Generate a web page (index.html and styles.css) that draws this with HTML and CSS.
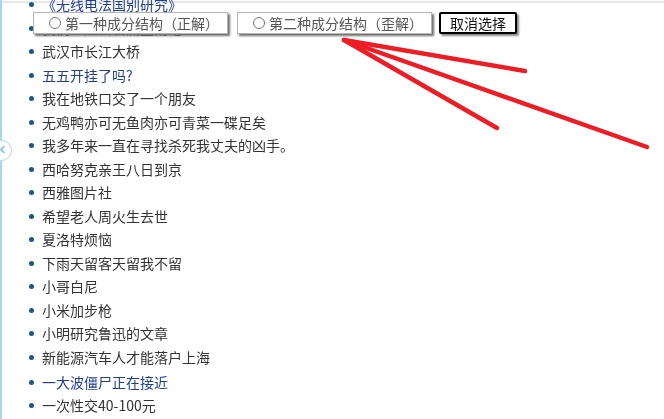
FILE: index.html
```html
<!DOCTYPE html>
<html lang="zh-CN">
<head>
    <meta charset="UTF-8">
    <meta name="viewport" content="width=device-width, initial-scale=1.0">
    <title>成分结构</title>
    <link rel="stylesheet" href="styles.css">
</head>
<body>
    <div class="topline"></div>
    <div class="sidebar"></div>
    <div class="toggle">
        <svg width="21" height="21" viewBox="0 0 21 21">
            <polyline points="13.5,6 10,9.5 13.5,13" fill="none" stroke="#7cc0ea" stroke-width="1.6"/>
        </svg>
    </div>

    <ul class="list">
        <li class="link">《无线电法国别研究》</li>
        <li>我们一起去看流星雨吧</li>
        <li>武汉市长江大桥</li>
        <li class="link">五五开挂了吗?</li>
        <li>我在地铁口交了一个朋友</li>
        <li>无鸡鸭亦可无鱼肉亦可青菜一碟足矣</li>
        <li>我多年来一直在寻找杀死我丈夫的凶手。</li>
        <li>西哈努克亲王八日到京</li>
        <li>西雅图片社</li>
        <li>希望老人周火生去世</li>
        <li>夏洛特烦恼</li>
        <li>下雨天留客天留我不留</li>
        <li>小哥白尼</li>
        <li>小米加步枪</li>
        <li>小明研究鲁迅的文章</li>
        <li>新能源汽车人才能落户上海</li>
        <li class="link gap">一大波僵尸正在接近</li>
        <li>一次性交40-100元</li>
    </ul>

    <div class="bar">
        <label class="choice"><span class="radio"></span>第一种成分结构（正解）</label>
        <label class="choice"><span class="radio"></span>第二种成分结构（歪解）</label>
        <button class="clear">取消选择</button>
    </div>

    <svg class="arrows" width="664" height="419" viewBox="0 0 664 419">
        <g stroke="#ee1c25" stroke-width="4.5" stroke-linecap="round" fill="none">
            <line x1="344" y1="40" x2="525" y2="71"/>
            <line x1="344" y1="40" x2="497" y2="128"/>
            <line x1="344" y1="40" x2="647" y2="147"/>
        </g>
    </svg>
</body>
</html>
```

FILE: styles.css
```css
*{
    box-sizing: border-box;
    padding: 0;
    margin: 0;
    font-family: "Noto Sans CJK SC", "Noto Sans", sans-serif;
}
body{
    background-color: #fff;
    color: #333;
    font-size: 14px;
    overflow: hidden;
    height: 419px;
}
.topline{
    position: fixed;
    top: 1px;
    left: 0;
    right: 0;
    height: 2px;
    background-color: #e8e8e8;
    z-index: -1;
}
.sidebar{
    position: fixed;
    top: 0;
    bottom: 0;
    left: 0;
    width: 2px;
    background-color: #a6d6f6;
}
.toggle{
    position: fixed;
    top: 140px;
    left: -9px;
    width: 21px;
    height: 21px;
    border: 1px solid #a6d6f6;
    border-radius: 50%;
    background-color: #fff;
}
.toggle svg{
    display: block;
    margin: -1px;
}
.list{
    list-style: none;
    margin-top: -7px;
    padding-left: 29px;
}
.list li{
    display: flex;
    align-items: center;
    height: 23.5px;
    line-height: 23.5px;
}
.list li::before{
    content: "";
    width: 5px;
    height: 5px;
    border-radius: 50%;
    background-color: #1b5591;
    margin-right: 8px;
    flex-shrink: 0;
}
.list .link{
    color: #1f3d9d;
}
.list .gap{
    margin-top: 1.5px;
}
.bar{
    position: fixed;
    top: 12px;
    left: 33px;
    display: flex;
    align-items: flex-start;
    gap: 9px;
}
.choice{
    display: flex;
    align-items: center;
    gap: 4px;
    width: 195px;
    height: 22px;
    padding-left: 15px;
    background-color: #fff;
    border: 1px solid #b4b4b4;
    box-shadow: 2px 2px 2px #6e6e6e;
    color: #555;
    font-size: 14px;
}
.radio{
    width: 12px;
    height: 12px;
    border: 1px solid #777;
    border-radius: 50%;
    background-color: #fff;
}
.clear{
    width: 78px;
    height: 22px;
    margin-left: -2px;
    background-color: #fff;
    border: 2px solid #000;
    border-radius: 2px;
    box-shadow: 2px 2px 2px #8a8a8a;
    color: #111;
    font-size: 14px;
    line-height: 16px;
}
.arrows{
    position: fixed;
    top: 0;
    left: 0;
}
```
